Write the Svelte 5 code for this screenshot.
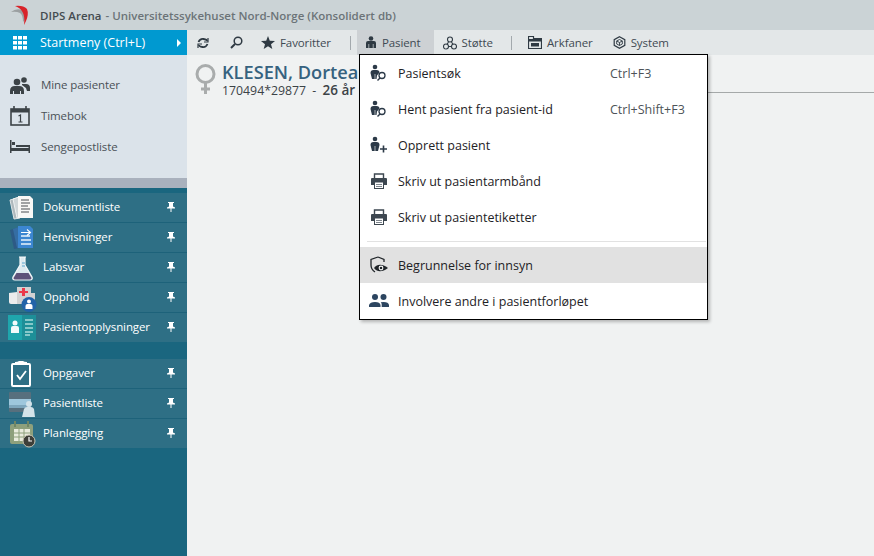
<script>
  const groupOne = [
    { label: 'Dokumentliste', icon: 'doc' },
    { label: 'Henvisninger', icon: 'ref' },
    { label: 'Labsvar', icon: 'lab' },
    { label: 'Opphold', icon: 'stay' },
    { label: 'Pasientopplysninger', icon: 'info' }
  ];
  const groupTwo = [
    { label: 'Oppgaver', icon: 'task' },
    { label: 'Pasientliste', icon: 'list' },
    { label: 'Planlegging', icon: 'plan' }
  ];
  const menuTop = [
    { label: 'Pasientsøk', key: 'Ctrl+F3', icon: 'search' },
    { label: 'Hent pasient fra pasient-id', key: 'Ctrl+Shift+F3', icon: 'search' },
    { label: 'Opprett pasient', icon: 'add' },
    { label: 'Skriv ut pasientarmbånd', icon: 'print' },
    { label: 'Skriv ut pasientetiketter', icon: 'print' }
  ];
</script>

{#snippet navIcon(name)}
  <svg class="nav-icon" width="30" height="28" viewBox="0 0 30 28">
    {#if name === 'doc'}
      <path d="M3 6l7-2 3 20-6 1z" fill="#aeb8bc" stroke="#dfe5e6" />
      <path d="M6 5l6-2 3 20-5 1z" fill="#cfd6d8" stroke="#eef1f1" />
      <path d="M11 2h12l3 3v19H11z" fill="#f8f8f6" />
      <path d="M14 6h8M14 9h9M14 12h7M14 15h9M14 18h8" stroke="#4b4f52" stroke-width="1.200" />
    {:else if name === 'ref'}
      <path d="M3 6l7-2 3 20-6 1z" fill="#2d5a86" />
      <path d="M6 5l6-2 3 20-5 1z" fill="#356da3" />
      <path d="M11 2h12l3 3v19H11z" fill="#3c86d1" />
      <path d="M14 12h9M14 16h10M14 20h10" stroke="#e9f3fb" stroke-width="1.300" />
      <path d="M14 8.500h9M20 5.500l3.500 3-3.500 3" fill="none" stroke="#fff" stroke-width="1.100" />
    {:else if name === 'lab'}
      <path d="M12 3h7M13 3v8L6 23q-1 3 2 3h15q3 0 2-3L18 11V3z" fill="#dce9ef" stroke="#f4f8fa" stroke-width="1.200" />
      <path d="M9.500 19h12l3 5q0 1.500-2 1.500H8.500q-2 0-2-1.500z" fill="#5d5179" />
      <path d="M15 9h3M15 12h3" stroke="#5ba7d0" />
    {:else if name === 'stay'}
      <path d="M2 9l8-1V3h14v6h4v11H4q-2 0-2-2z" fill="#ececec" />
      <path d="M10 3h14v6h4v11H10z" fill="#d2d2d2" />
      <path d="M15 4h3v3h3v2h-3v3h-3V9h-3V7h3z" fill="#ea3a4a" />
      <circle cx="22" cy="20.500" r="7.500" fill="#2163a8" />
      <circle cx="22" cy="17.500" r="2" fill="#fff" />
      <path d="M18.500 25v-3q0-2 2-2h3q2 0 2 2v3z" fill="#fff" />
    {:else if name === 'info'}
      <rect x="1" y="1" width="28" height="25" fill="#1d8f98" />
      <rect x="1" y="1" width="14" height="25" fill="#1fa6ad" />
      <circle cx="8" cy="9" r="2.500" fill="#f3fbfb" />
      <path d="M4 19v-5q0-2 2-2h4q2 0 2 2v5z" fill="#f3fbfb" />
      <path d="M18 6h8M18 10h8M18 14h8M18 18h8M18 21h5" stroke="#a9dcd9" stroke-width="1.400" />
    {:else if name === 'task'}
      <rect x="5" y="4" width="18" height="22" rx="1" fill="none" stroke="#fff" stroke-width="2" />
      <path d="M8 2q3 0 4-1h4q1 1 4 1v3H8z" fill="#fff" />
      <path d="M10 15l3 4 6-8" fill="none" stroke="#fff" stroke-width="1.800" />
    {:else if name === 'list'}
      <rect x="2" y="2" width="22" height="20" rx="1" fill="#576f7d" />
      <rect x="2" y="9" width="22" height="6" fill="#9ec7dc" />
      <rect x="2" y="15" width="22" height="3" fill="#7ea7bd" />
      <circle cx="22" cy="14" r="3" fill="#d3e3e9" />
      <path d="M15 27l2-8q1-2 3-2h4q2 0 3 2l1 8z" fill="#d3e3e9" />
    {:else}
      <rect x="3" y="4" width="23" height="20" rx="2" fill="#8ea07c" />
      <rect x="7" y="9" width="16" height="12" fill="#e9ecdd" />
      <path d="M12 9v12M17 9v12M7 13h16M7 17h16" stroke="#8ea07c" />
      <path d="M8 1v6M21 1v6" stroke="#6f8666" stroke-width="2" />
      <circle cx="22" cy="21" r="6" fill="#3e3f39" stroke="#c9c6b5" />
      <path d="M22 17v4h3" fill="none" stroke="#fff" stroke-width="1.200" />
    {/if}
  </svg>
{/snippet}

{#snippet navItem(item)}
  <li class="nav-item">
    {@render navIcon(item.icon)}
    <span class="nav-label">{item.label}</span>
    <svg class="pin" width="8" height="10" viewBox="0 0 8 10">
      <path d="M1 0h6v1H6v3.500l2 1V6.500H4.500V10h-1V6.500H0v-1l2-1V1H1z" fill="#fff" />
    </svg>
  </li>
{/snippet}

{#snippet menuIcon(name)}
  <svg class="menu-icon" width="20" height="18" viewBox="0 0 20 18">
    {#if name === 'search'}
      <g fill="#2c3a48">
        <circle cx="6" cy="3" r="2.300" />
        <path d="M3 15L1.500 9q0-3 3-3h3q3 0 3 2.500l-2.500 3L7.500 15H6.300v-5h-.6v5z" />
      </g>
      <circle cx="13" cy="11.500" r="3" fill="none" stroke="#2c3a48" stroke-width="1.300" />
      <path d="M11 14l-2.500 2.500" stroke="#2c3a48" stroke-width="1.500" />
    {:else if name === 'add'}
      <g fill="#2c3a48">
        <circle cx="6" cy="3" r="2.300" />
        <path d="M3 15L1.500 9q0-3 3-3h3q3 0 3 3L9 15H6.300v-5h-.6v5z" />
      </g>
      <path d="M11 13h7M14.500 9.500v7" stroke="#2c3a48" stroke-width="1.600" />
    {:else if name === 'print'}
      <path d="M5.500 6V2h9v4" fill="none" stroke="#3d4750" stroke-width="1.400" />
      <path d="M3 6h14q1 0 1 1v6h-3.500v-2h-9v2H2V7q0-1 1-1z" fill="#3d4750" />
      <rect x="5.500" y="10" width="9" height="6.500" fill="#fff" stroke="#3d4750" />
      <path d="M7 12.500h6M7 14.500h6" stroke="#7d858c" />
    {:else if name === 'eye'}
      <path d="M9 1L2 3.500V9q0 4.500 4 7" fill="none" stroke="#1f2428" stroke-width="1.300" />
      <path d="M9 1l6 2.500V6" fill="none" stroke="#1f2428" stroke-width="1.300" />
      <path d="M5 12q5-6.500 14 0q-9 6.500-14 0z" fill="#1f2428" />
      <circle cx="12" cy="12" r="2.400" fill="#fff" />
      <circle cx="12" cy="12" r="1.300" fill="#1f2428" />
    {:else}
      <g fill="#2c4560">
        <circle cx="6" cy="5" r="3" />
        <circle cx="14.500" cy="5" r="3" />
        <path d="M0 15v-2q1-3 6-3 5 0 5.500 3v2z" />
        <path d="M12.700 15v-2.500q0-1.300-1-2.200 1.300-.3 3-.3 4.800 0 5.300 3v2z" />
      </g>
    {/if}
  </svg>
{/snippet}

<div class="app">
  <header class="titlebar">
    <svg class="logo" width="20" height="20" viewBox="0 0 20 20">
      <path d="M1 7Q6 3 12 5q4 2 3 9-1 2-2 3 0-7-3-9Q6 6 1 7z" fill="#9b9fa1" />
      <path d="M5 1q8-1 12 3 2 5-1 12l-2 4q1-8-1-12Q11 3 5 1z" fill="#d8232a" />
    </svg>
    <span class="title-app">DIPS Arena</span>
    <span class="title-rest">- Universitetssykehuset Nord-Norge (Konsolidert db)</span>
  </header>

  <div class="body">
    <aside class="sidebar">
      <div class="startmenu">
        <svg width="15" height="14" viewBox="0 0 15 14" fill="#fff">
          {#each [0, 5, 10] as y}
            {#each [0, 5, 10] as x}
              <rect x={x} y={y} width="4" height="3.500" />
            {/each}
          {/each}
        </svg>
        <span class="start-label">Startmeny (Ctrl+L)</span>
        <span class="caret"></span>
      </div>

      <ul class="quick">
        <li>
          <svg width="20" height="20" viewBox="0 0 20 20" fill="#3c4347">
            <circle cx="14" cy="5" r="2.800" />
            <path d="M12 9h4q4 0 4 4v3h-3l-1-3-4-3z" />
            <circle cx="7" cy="7" r="3.300" />
            <path d="M0 19v-3q0-5 5-5h4q5 0 5 5v3h-3v-3h-1v3H4v-3H3v3z" />
          </svg>
          <span>Mine pasienter</span>
        </li>
        <li>
          <svg width="20" height="20" viewBox="0 0 20 20">
            <rect x="1" y="3" width="18" height="16" fill="none" stroke="#3c4347" stroke-width="1.600" />
            <rect x="1" y="3" width="18" height="3.500" fill="#3c4347" />
            <path d="M4 0v4M16 0v4" stroke="#3c4347" stroke-width="1.600" />
            <path d="M8.500 10l2-1v7M8.500 16h4" fill="none" stroke="#3c4347" stroke-width="1.200" />
          </svg>
          <span>Timebok</span>
        </li>
        <li>
          <svg width="20" height="20" viewBox="0 0 20 20" fill="#3c4347">
            <rect x="0" y="3" width="1.500" height="13" />
            <rect x="18.500" y="8" width="1.500" height="8" />
            <rect x="1" y="11" width="18" height="3" />
            <rect x="2" y="5" width="3" height="3" />
            <path d="M6 8h13v2H6z" />
          </svg>
          <span>Sengepostliste</span>
        </li>
      </ul>

      <div class="divider"></div>

      <div class="modules">
        <ul class="nav-group">
          {#each groupOne as item}
            {@render navItem(item)}
          {/each}
        </ul>
        <ul class="nav-group">
          {#each groupTwo as item}
            {@render navItem(item)}
          {/each}
        </ul>
      </div>
    </aside>

    <main class="main">
      <nav class="toolbar">
        <button class="tool refresh">
          <svg width="12" height="12" viewBox="0 0 12 12" fill="none" stroke="#2f3a43" stroke-width="1.800">
            <path d="M1.500 5Q3 1.500 6.500 2T10 4M10.500 7Q9 10.500 5.500 10T2 8" />
            <path d="M11 1v4H7M1 11V7h4" stroke-width="1.200" />
          </svg>
        </button>
        <button class="tool find">
          <svg width="13" height="13" viewBox="0 0 13 13" fill="none" stroke="#2f3a43" stroke-width="1.500">
            <circle cx="8" cy="5" r="3.800" />
            <path d="M5 8L1 12" stroke-width="2" />
          </svg>
        </button>
        <button class="tool fav">
          <svg width="14" height="13" viewBox="0 0 14 13" fill="#2f3a43">
            <path d="M7 0l1.800 4.700 5.200.3-4 3.200L11.300 13 7 10.300 2.700 13 4 8.200 0 5l5.200-.3z" />
          </svg>
          Favoritter
        </button>
        <span class="sep first"></span>
        <button class="tool active">
          <svg width="12" height="13" viewBox="0 0 12 13" fill="#2f3a43">
            <circle cx="6" cy="2.500" r="2.300" />
            <path d="M1 12V7q0-2 2-2h6q2 0 2 2v5H8.500V8h-.7v4H4.200V8h-.7v4z" />
          </svg>
          Pasient
        </button>
        <button class="tool help">
          <svg width="14" height="14" viewBox="0 0 14 14" fill="none" stroke="#2f3a43" stroke-width="1.100">
            <circle cx="7" cy="3.500" r="2.500" />
            <circle cx="3" cy="10.500" r="2.500" />
            <circle cx="11" cy="10.500" r="2.500" />
            <path d="M5.500 6L4 8.500M8.500 6L10 8.500M5.500 10.500h3" />
          </svg>
          Støtte
        </button>
        <span class="sep second"></span>
        <button class="tool tabs">
          <svg width="14" height="13" viewBox="0 0 14 13">
            <path d="M.5.500h5v2h8v10H.5z" fill="none" stroke="#2f3a43" stroke-width="1.200" />
            <rect x="1" y="3" width="12" height="2.500" fill="#2f3a43" />
            <rect x="3" y="7" width="8" height="3.500" fill="#2f3a43" />
          </svg>
          Arkfaner
        </button>
        <button class="tool system">
          <svg width="13" height="13" viewBox="0 0 13 13" fill="none" stroke="#2f3a43" stroke-width="1.200">
            <path d="M6.500.7l5.300 2.900v5.800l-5.300 2.900-5.300-2.900V3.600z" />
            <path d="M6.500 3.500l2.800 1.500v3L6.500 9.500 3.700 8V5zM3.700 5l2.800 1.500L9.300 5M6.500 6.500v3" stroke-width=".9" />
          </svg>
          System
        </button>
      </nav>

      <section class="patient">
        <svg class="gender" width="24" height="32" viewBox="0 0 24 32" fill="none" stroke="#a9acac">
          <circle cx="11.500" cy="10" r="8.500" stroke-width="3" />
          <path d="M11.500 19v11M7 25h9" stroke-width="3" />
        </svg>
        <div class="patient-text">
          <h1>KLESEN, Dortea</h1>
          <p>170494*29877 <span class="dash">-</span> <strong>26 år</strong></p>
        </div>
      </section>
      <div class="rule"></div>

      <div class="menu">
        <ul>
          {#each menuTop as item}
            <li class="menu-row">
              {@render menuIcon(item.icon)}
              <span class="menu-label">{item.label}</span>
              {#if item.key}<span class="menu-key">{item.key}</span>{/if}
            </li>
          {/each}
        </ul>
        <div class="menu-sep"></div>
        <ul>
          <li class="menu-row hover">
            {@render menuIcon('eye')}
            <span class="menu-label">Begrunnelse for innsyn</span>
          </li>
          <li class="menu-row">
            {@render menuIcon('people')}
            <span class="menu-label">Involvere andre i pasientforløpet</span>
          </li>
        </ul>
      </div>
    </main>
  </div>
</div>

<style>
  :global(body) {
    font-family: "Open Sans", "Noto Sans", sans-serif;
    font-size: 12px;
  }

  ul {
    list-style: none;
    margin: 0;
    padding: 0;
  }

  .app {
    display: flex;
    flex-direction: column;
    height: 556px;
    width: 874px;
    overflow: hidden;
  }

  .titlebar {
    display: flex;
    align-items: center;
    height: 30px;
    padding-left: 10px;
    background: #cbd3d6;
    font-size: 11.500px;
    font-weight: 600;
  }

  .logo {
    margin-right: 10px;
  }

  .title-app {
    color: #444b50;
    margin-right: 4px;
  }

  .title-rest {
    color: #6b7378;
  }

  .body {
    display: flex;
    flex: 1;
    min-height: 0;
  }

  .sidebar {
    display: flex;
    flex-direction: column;
    width: 187px;
    flex-shrink: 0;
    background: #1a667f;
    font-size: 11.500px;
    letter-spacing: -.1px;
  }

  .startmenu {
    display: flex;
    align-items: center;
    height: 25px;
    padding-left: 13px;
    background: #0099d0;
    color: #fff;
    font-size: 12.500px;
    letter-spacing: 0;
  }

  .start-label {
    margin-left: 12px;
    flex: 1;
  }

  .caret {
    width: 0;
    height: 0;
    margin-right: 6px;
    border-left: 4px solid #fff;
    border-top: 4px solid transparent;
    border-bottom: 4px solid transparent;
  }

  .quick {
    height: 123px;
    box-sizing: border-box;
    padding-top: 14px;
    background: #dbe3ea;
    color: #4a5157;
  }

  .quick li {
    display: flex;
    align-items: center;
    gap: 11px;
    height: 31px;
    padding-left: 10px;
  }

  .divider {
    height: 10px;
    background: #a9b1bd;
  }

  .modules {
    padding-top: 5px;
  }

  .nav-group {
    margin-bottom: 17px;
  }

  .nav-item {
    display: flex;
    align-items: center;
    height: 29px;
    border-bottom: 1px solid #1d627a;
    padding-left: 7px;
    background: #2e6f85;
    color: #fff;
  }

  .nav-item:last-child {
    border-bottom: 0;
  }

  .nav-icon {
    flex-shrink: 0;
  }

  .nav-label {
    flex: 1;
    margin-left: 6px;
    padding-bottom: 3px;
  }

  .pin {
    margin-right: 12px;
    margin-bottom: 1px;
  }

  .main {
    position: relative;
    flex: 1;
    background: #f0f2f2;
  }

  .toolbar {
    display: flex;
    align-items: center;
    height: 25px;
    padding-left: 10px;
    background: #e3e7e8;
    font-size: 11.500px;
    letter-spacing: -.1px;
  }

  .tool {
    display: flex;
    align-items: center;
    gap: 5px;
    height: 25px;
    padding: 0;
    border: 0;
    background: none;
    color: #3f4a53;
    font: inherit;
    letter-spacing: inherit;
    white-space: nowrap;
  }

  .find {
    margin-left: 21px;
  }

  .fav {
    margin-left: 18px;
  }

  .tool.active {
    padding: 0 13px 0 8px;
    background: #cdd1d4;
  }

  .help {
    margin-left: 9px;
  }

  .tabs {
    margin-left: 16px;
  }

  .system {
    margin-left: 20px;
  }

  .sep {
    width: 1px;
    height: 14px;
    background: #a3a9ad;
  }

  .sep.first {
    margin: 0 6px 0 19px;
  }

  .sep.second {
    margin-left: 18px;
  }

  .patient {
    display: flex;
    gap: 4px;
    padding: 6px 0 0 7px;
  }

  .gender {
    flex-shrink: 0;
    margin-top: 3px;
  }

  .patient-text {
    white-space: nowrap;
  }

  h1 {
    margin: 0;
    font-size: 18.200px;
    line-height: 22px;
    font-weight: 600;
    color: #36627f;
  }

  p {
    margin: 0;
    font-size: 12.300px;
    line-height: 14px;
    color: #3c4347;
  }

  .dash {
    margin: 0 3px;
  }

  strong {
    font-weight: 600;
    font-size: 13.500px;
  }

  .rule {
    position: absolute;
    top: 62px;
    left: 172px;
    right: 0;
    height: 1px;
    background: #a5a9a9;
  }

  .menu {
    position: absolute;
    top: 24px;
    left: 172px;
    width: 347px;
    background: #fff;
    border: 1px solid #000;
    box-shadow: 2px 2px 3px rgba(0, 0, 0, .25);
    color: #1e2226;
    font-size: 12.500px;
  }

  .menu-row {
    display: flex;
    align-items: center;
    height: 36px;
    padding: 0 18px 0 9px;
  }

  .menu-row.hover {
    background: #e1e1e1;
  }

  .menu-icon {
    flex-shrink: 0;
  }

  .menu-label {
    flex: 1;
    margin-left: 9px;
  }

  .menu-key {
    width: 79px;
    color: #4d5358;
  }

  .menu-sep {
    height: 1px;
    margin: 6px 1px 5px 7px;
    background: #e2e2e2;
  }
</style>
